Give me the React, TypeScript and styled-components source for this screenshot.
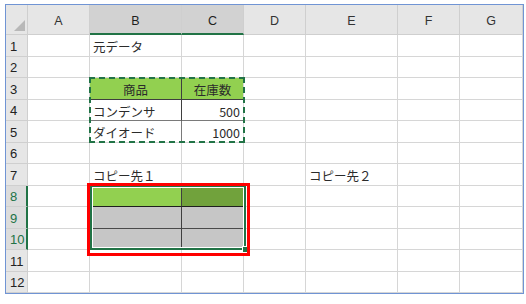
import React from 'react';
import styled, { createGlobalStyle } from 'styled-components';

const GlobalStyle = createGlobalStyle`
    html, body {
        margin: 0;
        padding: 0;
        background: #ffffff;
    }
    body {
        font-family: 'Liberation Sans', 'Noto Sans CJK JP', sans-serif;
    }
`;

const GRID = '#d6d6d6';
const DARK = '#3f3f3f';
const EXCEL_GREEN = '#217346';

const COLS = ['A', 'B', 'C', 'D', 'E', 'F', 'G'];
const COL_WIDTHS = [62, 92, 62, 62, 92, 62, 63];
const ROW_HEIGHTS = [22, 21, 22, 21, 22, 21, 22, 21, 22, 21, 22, 21];

const Page = styled.div`
    padding: 4px 0 0 5px;
`;

const Sheet = styled.div`
    display: grid;
    grid-template-columns: 22px ${COL_WIDTHS.map((w) => `${w}px`).join(' ')};
    grid-template-rows: 30px ${ROW_HEIGHTS.map((h) => `${h}px`).join(' ')};
    width: max-content;
    border: 1px solid #7094d4;
    position: relative;
`;

const Corner = styled.div`
    grid-row: 1;
    grid-column: 1;
    background: #e6e6e6;
    border-right: 1px solid #cfcfcf;
    border-bottom: 1px solid #cfcfcf;
    display: flex;
    align-items: flex-end;
    justify-content: flex-end;
    padding: 0 2px 3px 0;
    box-sizing: border-box;
`;

const CornerMark = styled.div`
    width: 0;
    height: 0;
    border-left: 11px solid transparent;
    border-bottom: 11px solid #b8b8b8;
`;

const ColHeader = styled.div<{ $active?: boolean }>`
    grid-row: 1;
    background: ${(p) => (p.$active ? '#d2d2d2' : '#e6e6e6')};
    border-right: 1px solid #cfcfcf;
    border-bottom: ${(p) => (p.$active ? `2px solid ${EXCEL_GREEN}` : '1px solid #cfcfcf')};
    box-sizing: border-box;
    display: flex;
    align-items: center;
    justify-content: center;
    padding-top: 3px;
    font-size: 12.5px;
    color: ${(p) => (p.$active ? '#1e1e1e' : '#333333')};
`;

const RowHeader = styled.div<{ $active?: boolean }>`
    grid-column: 1;
    background: ${(p) => (p.$active ? '#dcdcdc' : '#e6e6e6')};
    border-right: ${(p) => (p.$active ? `2px solid ${EXCEL_GREEN}` : '1px solid #cfcfcf')};
    border-bottom: 1px solid #cfcfcf;
    box-sizing: border-box;
    display: flex;
    align-items: center;
    padding: 1px 0 0 4px;
    font-size: 13px;
    color: ${(p) => (p.$active ? EXCEL_GREEN : '#222222')};
`;

const Cell = styled.div<{
    $fill?: string;
    $align?: 'left' | 'center' | 'right';
    $right?: string;
    $bottom?: string;
}>`
    background: ${(p) => p.$fill || '#ffffff'};
    border-right: 1px solid ${(p) => p.$right || GRID};
    border-bottom: 1px solid ${(p) => p.$bottom || GRID};
    box-sizing: border-box;
    display: flex;
    align-items: center;
    justify-content: ${(p) =>
        p.$align === 'right' ? 'flex-end' : p.$align === 'center' ? 'center' : 'flex-start'};
    padding: 2px 3px 0 3px;
    font-family: 'Noto Sans CJK JP', 'Liberation Sans', sans-serif;
    font-size: 12.5px;
    color: #2b2b2b;
    white-space: nowrap;
    overflow: visible;
`;

const CopyMarquee = styled.div`
    grid-row: 4 / 7;
    grid-column: 3 / 5;
    margin: -1px -1px 0 -1px;
    border: 2px dashed ${EXCEL_GREEN};
    pointer-events: none;
    z-index: 2;
`;

const Selection = styled.div`
    grid-row: 9 / 12;
    grid-column: 3 / 5;
    margin: -1px -2px 0 0;
    border: 2px solid ${EXCEL_GREEN};
    box-shadow: inset 0 0 0 1px #ffffff;
    pointer-events: none;
    position: relative;
    z-index: 2;
`;

const FillHandle = styled.div`
    position: absolute;
    right: -5px;
    bottom: -5px;
    width: 5px;
    height: 5px;
    background: ${EXCEL_GREEN};
    border: 1px solid #ffffff;
`;

const Highlight = styled.div`
    grid-row: 9 / 12;
    grid-column: 3 / 5;
    margin: -3px -6px -6px -3px;
    border: 3px solid #ff0000;
    pointer-events: none;
    z-index: 3;
`;

type CellData = {
    text?: string;
    fill?: string;
    align?: 'left' | 'center' | 'right';
    right?: string;
    bottom?: string;
};

const cells: Record<string, CellData> = {
    B1: { text: '元データ' },
    B3: { text: '商品', fill: '#92d050', align: 'center', right: DARK, bottom: DARK },
    C3: { text: '在庫数', fill: '#92d050', align: 'center', bottom: DARK },
    B4: { text: 'コンデンサ', right: DARK, bottom: '#7a7a7a' },
    C4: { text: '500', align: 'right', bottom: '#7a7a7a' },
    B5: { text: 'ダイオード', right: '#7a7a7a' },
    C5: { text: '1000', align: 'right' },
    B7: { text: 'コピー先１' },
    E7: { text: 'コピー先２' },
    B8: { fill: '#92d050', right: DARK, bottom: '#1f1f1f' },
    C8: { fill: '#71a23c', bottom: '#1f1f1f' },
    B9: { fill: '#c6c6c6', right: DARK, bottom: '#4a4a4a' },
    C9: { fill: '#c6c6c6', bottom: '#4a4a4a' },
    B10: { fill: '#c6c6c6', right: DARK },
    C10: { fill: '#c6c6c6' },
};

const activeCols = ['B', 'C'];
const activeRows = [8, 9, 10];

const App = (): JSX.Element => {
    return (
        <Page>
            <GlobalStyle />
            <Sheet>
                <Corner>
                    <CornerMark />
                </Corner>
                {COLS.map((c, i) => (
                    <ColHeader key={c} $active={activeCols.includes(c)} style={{ gridColumn: i + 2 }}>
                        {c}
                    </ColHeader>
                ))}
                {ROW_HEIGHTS.map((_, r) => {
                    const row = r + 1;
                    return (
                        <React.Fragment key={row}>
                            <RowHeader $active={activeRows.includes(row)} style={{ gridRow: row + 1 }}>
                                {row}
                            </RowHeader>
                            {COLS.map((c, i) => {
                                const d = cells[`${c}${row}`] || {};
                                return (
                                    <Cell
                                        key={c}
                                        $fill={d.fill}
                                        $align={d.align}
                                        $right={d.right}
                                        $bottom={d.bottom}
                                        style={{ gridRow: row + 1, gridColumn: i + 2 }}
                                    >
                                        {d.text}
                                    </Cell>
                                );
                            })}
                        </React.Fragment>
                    );
                })}
                <CopyMarquee />
                <Selection>
                    <FillHandle />
                </Selection>
                <Highlight />
            </Sheet>
        </Page>
    );
};

export default App;
